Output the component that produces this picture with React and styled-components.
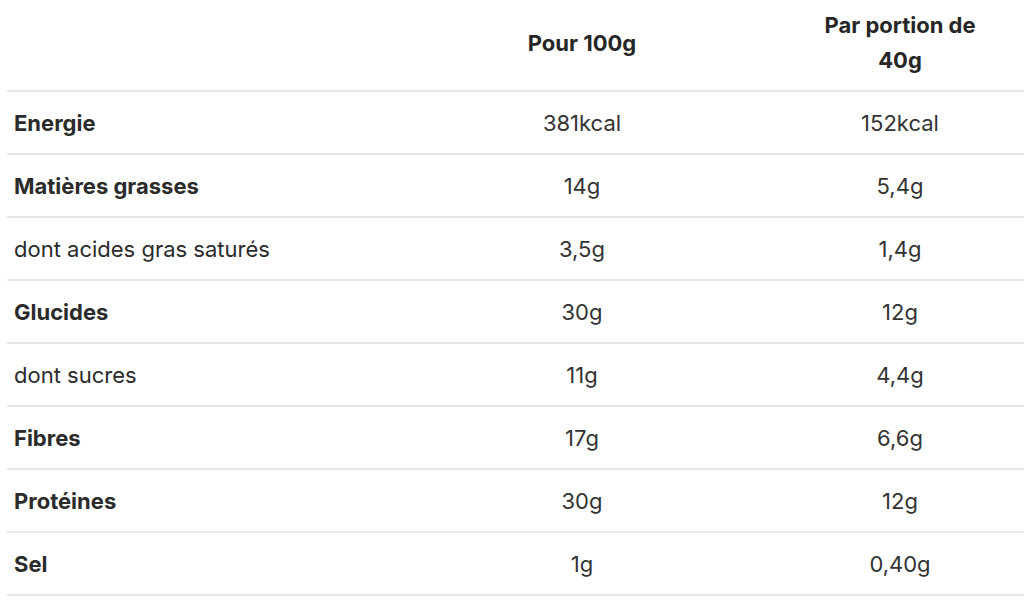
import React from "react";
import styled, { createGlobalStyle } from "styled-components";

const GlobalStyle = createGlobalStyle`
  html, body {
    margin: 0;
    padding: 0;
    background: #ffffff;
  }
  body {
    font-family: "Inter", "Noto Sans", sans-serif;
    color: #2b2b2b;
  }
`;

const rows = [
  { label: "Energie", bold: true, per100: "381kcal", portion: "152kcal" },
  { label: "Matières grasses", bold: true, per100: "14g", portion: "5,4g" },
  { label: "dont acides gras saturés", bold: false, per100: "3,5g", portion: "1,4g" },
  { label: "Glucides", bold: true, per100: "30g", portion: "12g" },
  { label: "dont sucres", bold: false, per100: "11g", portion: "4,4g" },
  { label: "Fibres", bold: true, per100: "17g", portion: "6,6g" },
  { label: "Protéines", bold: true, per100: "30g", portion: "12g" },
  { label: "Sel", bold: true, per100: "1g", portion: "0,40g" },
];

const Table = styled.div`
  margin-left: 7px;
  width: 1017px;
`;

const Row = styled.div`
  display: grid;
  grid-template-columns: 352px 446px 190px 29px;
  align-items: center;
  box-sizing: border-box;
  height: ${(p) => (p.head ? "92px" : "63px")};
  padding-bottom: ${(p) => (p.head ? "4px" : "0")};
  border-bottom: 2px solid #e8e8e8;
`;

const Label = styled.div`
  padding-left: 7px;
  font-size: 22px;
  font-weight: ${(p) => (p.bold ? 700 : 400)};
  color: #2b2b2b;
`;

const Value = styled.div`
  text-align: center;
  font-size: 22px;
  color: #333333;
`;

const HeadCell = styled.div`
  text-align: center;
  font-size: 22px;
  font-weight: 700;
  line-height: 35px;
  color: #262626;
`;

export default function App() {
  return (
    <>
      <GlobalStyle />
      <Table>
        <Row head>
          <div />
          <HeadCell>Pour 100g</HeadCell>
          <HeadCell>Par portion de 40g</HeadCell>
          <div />
        </Row>
        {rows.map((r) => (
          <Row key={r.label}>
            <Label bold={r.bold}>{r.label}</Label>
            <Value>{r.per100}</Value>
            <Value>{r.portion}</Value>
            <div />
          </Row>
        ))}
      </Table>
    </>
  );
}
